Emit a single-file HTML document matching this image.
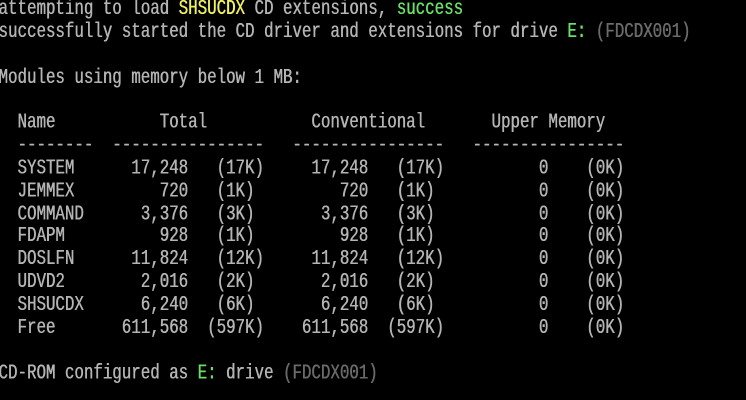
<!DOCTYPE html>
<html><head><meta charset="utf-8"><style>
html,body{margin:0;padding:0;background:#000;width:746px;height:400px;overflow:hidden}
pre{position:absolute;left:-1.6px;top:-2px;margin:0;font-family:"Liberation Mono",monospace;font-size:15.8px;line-height:16.85px;color:#b4b4b4;transform:scaleY(1.35);transform-origin:0 0;font-weight:normal;text-shadow:0.4px 0 0 #b4b4b4}
.y{color:#f0f060;text-shadow:0.4px 0 0 #f0f060}.g{color:#66e066;text-shadow:0.4px 0 0 #66e066}.d{color:#6a6a6a;text-shadow:0.4px 0 0 #6a6a6a}
</style></head><body><pre>attempting to load <span class="y">SHSUCDX</span> CD extensions, <span class="g">success</span>
successfully started the CD driver and extensions for drive <span class="g">E:</span> <span class="d">(FDCDX001)</span>

Modules using memory below 1 MB:

  Name           Total           Conventional       Upper Memory
  --------  ----------------   ----------------   ----------------
  SYSTEM      17,248   (17K)     17,248   (17K)          0    (0K)
  JEMMEX         720   (1K)         720   (1K)           0    (0K)
  COMMAND      3,376   (3K)       3,376   (3K)           0    (0K)
  FDAPM          928   (1K)         928   (1K)           0    (0K)
  DOSLFN      11,824   (12K)     11,824   (12K)          0    (0K)
  UDVD2        2,016   (2K)       2,016   (2K)           0    (0K)
  SHSUCDX      6,240   (6K)       6,240   (6K)           0    (0K)
  Free       611,568  (597K)    611,568  (597K)          0    (0K)

CD-ROM configured as <span class="g">E:</span> drive <span class="d">(FDCDX001)</span></pre></body></html>
